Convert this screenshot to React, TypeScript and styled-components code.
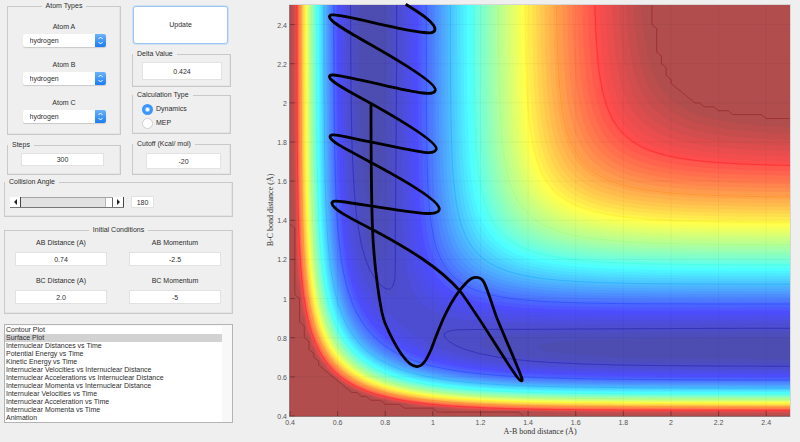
import React from "react";
import styled, { createGlobalStyle } from "styled-components";

const GlobalStyle = createGlobalStyle`
  * { box-sizing: border-box; }
  body {
    margin: 0;
    background: #efefef;
    color: #2e2e2e;
    font-family: "Liberation Sans", Arial, sans-serif;
    font-size: 7px;
    line-height: 8px;
  }
  button, input, select { font: inherit; color: inherit; }
`;

/* ---------- potential energy surface ---------- */

const WELL_DEPTH = 109.5;
const BETA = 1.942;
const R_EQ = 0.7419;
const SATO = 0.187;
const CUTOFF = -22;
const R_MIN = 0.4;
const R_MAX = 2.5;
const STEP = 0.02;
const NODES = Math.round((R_MAX - R_MIN) / STEP) + 1;

const PLOT = { left: 290, right: 790, top: 5, bottom: 416 };
const xOf = (r: number) =>
  PLOT.left + ((r - R_MIN) / (R_MAX - R_MIN)) * (PLOT.right - PLOT.left);
const yOf = (r: number) =>
  PLOT.bottom - ((r - R_MIN) / (R_MAX - R_MIN)) * (PLOT.bottom - PLOT.top);

function integrals(r: number) {
  const e = Math.exp(-BETA * (r - R_EQ));
  const q = (WELL_DEPTH / 4) * ((3 + SATO) * e * e - (2 + 6 * SATO) * e);
  const j = (WELL_DEPTH / 4) * ((1 + 3 * SATO) * e * e - (6 + 2 * SATO) * e);
  return [q, j];
}

function energy(ab: number, bc: number) {
  const [q1, j1] = integrals(ab);
  const [q2, j2] = integrals(bc);
  const [q3, j3] = integrals(ab + bc);
  const exchange = Math.sqrt(((j1 - j2) ** 2 + (j2 - j3) ** 2 + (j3 - j1) ** 2) / 2);
  return Math.min(CUTOFF, (q1 + q2 + q3 - exchange) / (1 + SATO));
}

type Point = [number, number];

const grid: number[][] = Array.from({ length: NODES }, (_, j) =>
  Array.from({ length: NODES }, (_, i) => energy(R_MIN + i * STEP, R_MIN + j * STEP))
);

/* Traces the level set; the grid is ringed with low values so every loop closes. */
function traceLoops(level: number): Point[][] {
  const size = NODES + 2;
  const clamp = (n: number) => Math.max(0, Math.min(NODES - 1, n - 1));
  const at = (i: number, j: number) =>
    i === 0 || j === 0 || i === size - 1 || j === size - 1 ? -1e9 : grid[j - 1][i - 1];
  const links = new Map<number, number[]>();
  const points = new Map<number, Point>();

  const edge = (i: number, j: number, vertical: boolean) => {
    const id = (j * size + i) * 2 + (vertical ? 1 : 0);
    if (!points.has(id)) {
      const i2 = vertical ? i : i + 1;
      const j2 = vertical ? j + 1 : j;
      const a = at(i, j);
      const b = at(i2, j2);
      const t = (level - a) / (b - a);
      points.set(id, [
        xOf(R_MIN + STEP * (clamp(i) + t * (clamp(i2) - clamp(i)))),
        yOf(R_MIN + STEP * (clamp(j) + t * (clamp(j2) - clamp(j)))),
      ]);
    }
    return id;
  };
  const link = (a: number, b: number) => {
    links.set(a, [...(links.get(a) || []), b]);
    links.set(b, [...(links.get(b) || []), a]);
  };

  for (let j = 0; j < size - 1; j++) {
    for (let i = 0; i < size - 1; i++) {
      const a = at(i, j) >= level;
      const b = at(i + 1, j) >= level;
      const c = at(i + 1, j + 1) >= level;
      const d = at(i, j + 1) >= level;
      const hits: number[] = [];
      if (a !== b) hits.push(edge(i, j, false));
      if (b !== c) hits.push(edge(i + 1, j, true));
      if (c !== d) hits.push(edge(i, j + 1, false));
      if (d !== a) hits.push(edge(i, j, true));
      for (let k = 0; k + 1 < hits.length; k += 2) link(hits[k], hits[k + 1]);
    }
  }

  const seen = new Set<number>();
  const loops: Point[][] = [];
  for (const start of links.keys()) {
    if (seen.has(start)) continue;
    const loop: Point[] = [];
    let current: number | undefined = start;
    while (current !== undefined) {
      seen.add(current);
      loop.push(points.get(current)!);
      current = links.get(current)!.find((n) => !seen.has(n));
    }
    loops.push(loop);
  }
  return loops;
}

const fmt = ([x, y]: Point) => `${x.toFixed(1)} ${y.toFixed(1)}`;
const regionPath = (level: number) =>
  traceLoops(level).map((l) => "M" + l.map(fmt).join("L") + "Z").join("");

/* Same level set without the stretches that run along the frame. */
function linePath(level: number) {
  const onFrame = ([x, y]: Point) =>
    x < PLOT.left + 0.01 || x > PLOT.right - 0.01 || y < PLOT.top + 0.01 || y > PLOT.bottom - 0.01;
  return traceLoops(level)
    .map((loop) =>
      loop
        .map((p, k) => {
          const prev = loop[(k + loop.length - 1) % loop.length];
          return (onFrame(p) && onFrame(prev) ? "M" : k === 0 ? `M${fmt(prev)}L` : "L") + fmt(p);
        })
        .join("")
    )
    .join("");
}

function jet(t: number, strength: number) {
  const channel = (center: number) => {
    const v = Math.max(0, Math.min(1, 1.5 - Math.abs(4 * t - center)));
    return Math.round(255 * (1 - strength) + 255 * strength * v);
  };
  return `rgb(${channel(3)},${channel(2)},${channel(1)})`;
}

const BANDS = 64;
const span = CUTOFF + WELL_DEPTH;
const bands = Array.from({ length: BANDS }, (_, k) => ({
  d: regionPath(CUTOFF - span * (1 - k / (BANDS - 1))),
  fill: jet(Math.min(k + 1, BANDS - 1) / BANDS, 0.7),
}));
const contours = Array.from({ length: 9 }, (_, k) => {
  const level = k === 8 ? CUTOFF : -105.6 + k * 10.4;
  return { d: linePath(level), stroke: jet((level + WELL_DEPTH) / span, 0.9) };
});

/* ---------- trajectory ---------- */

const trajectory = `
  M405.7 4.3C425 16 435.5 24 435 29.5C434.6 33 430 33.3 424 32.5
  C400 30 370 21 340 15.7C333 14.5 329 14.5 329.5 17C330 21 341 28 370 44.3
  C403 63 436 83 435.3 90C434.6 94 429 93.7 423 93
  C400 90 370 81 340 75.8C333 74.6 329 74.5 329.5 77C330 81 342 88 371 103.5
  C404 122 437 142 436.3 149C435.6 153 430 153 424 152.3
  C400 149 371 141.5 341 135.8C334 134.6 330 134 330 137C330.5 141 342 147 371 162.4
  C406 181 439.5 201 439.3 209C439 213.5 431 213.8 424 213.3
  C400 211 370 205.8 345 202C336 200.7 331.5 200.5 332 203.5C333 209 345 215.5 373.3 230
  C410 249.6 440 268 460 291C480 318 500 353 517 377C520 381 523 382.5 522 378.5
  C515 360 505 338 497 318.3C493 308 488 290 483.8 282C480.5 276 473 275.5 467 282
  C450 299 440 325 431.5 348.5C427 359 423 366.6 416.7 366.6C408 366.6 396 349 385 323
  C380.5 312 373.5 265 372.3 223C371 183 371 140 371 102.5`;

/* ---------- styled parts ---------- */

const Window = styled.main`
  display: flex;
  align-items: flex-start;
`;

const Sidebar = styled.div`
  flex: none;
  width: 260px;
  padding: 2px 27px 0 4px;
  display: flex;
  flex-direction: column;
`;

const Columns = styled.div`
  display: grid;
  grid-template-columns: 114px 1fr;
  gap: 11px;
  padding: 0 2px 0 3px;
`;

const Stack = styled.div<{ $gap: number }>`
  display: flex;
  flex-direction: column;
  gap: ${(p) => p.$gap}px;
`;

const GroupFrame = styled.fieldset<{ $top: number }>`
  min-width: 0;
  margin: ${(p) => p.$top}px 0 0;
  padding: 0;
  border: 1px solid #c9c9c9;
  box-shadow: inset -1px -1px 0 #e4e4e4;
`;

const Legend = styled.legend<{ $center?: boolean }>`
  padding: 0 4px;
  margin: ${(p) => (p.$center ? "0 auto" : "0")};
`;

const GroupBody = styled.div<{ $pad: string }>`
  padding: ${(p) => p.$pad};
`;

const AtomField = styled.label`
  display: flex;
  flex-direction: column;
  align-items: center;
  gap: 3px;
`;

const SelectBox = styled.span`
  position: relative;
  width: 83px;
  height: 13px;
`;

const Select = styled.select`
  appearance: none;
  display: block;
  width: 100%;
  height: 13px;
  padding: 0 14px 0 7px;
  border: 0;
  border-radius: 2px;
  background: #fff;
  box-shadow: 0 1px 1px #c8c8c8;
`;

const Stepper = styled.svg`
  position: absolute;
  top: 0;
  right: 0;
  width: 11px;
  height: 13px;
  pointer-events: none;
`;

const UpdateButton = styled.button`
  height: 38px;
  margin: 4px 3px 2px 1px;
  border: 1px solid #9fc6f0;
  border-radius: 3px;
  background: #fff;
  box-shadow: 0 0 0 1px #cfe0f3;
`;

const TextBox = styled.input<{ $height: number }>`
  display: block;
  width: 100%;
  min-width: 0;
  height: ${(p) => p.$height}px;
  padding: 0;
  border: 1px solid #e2e2e2;
  background: #fff;
  text-align: center;
`;

const RadioRow = styled.label`
  display: flex;
  align-items: center;
  gap: 3px;
  height: 14px;
`;

const Radio = styled.input`
  appearance: none;
  width: 11px;
  height: 11px;
  margin: 0;
  border: 1px solid #cfcfcf;
  border-radius: 50%;
  background: #fff;
  &:checked {
    border: 0;
    background: radial-gradient(circle, #fff 1px, #3a96fb 3px);
  }
`;

const AngleRow = styled.div`
  display: grid;
  grid-template-columns: 114px 23px;
  align-items: center;
  gap: 7px;
`;

const Scroller = styled.div`
  display: flex;
  height: 11px;
  border-bottom: 1px solid #777;
`;

const ArrowButton = styled.button`
  flex: none;
  width: 11px;
  padding: 0;
  border: 0;
  border-right: 1px solid #444;
  background: #fff;
  svg { display: block; margin: auto; }
`;

const Range = styled.input`
  appearance: none;
  flex: 1;
  min-width: 0;
  height: 10px;
  margin: 0;
  border-top: 1px solid #a5a5a5;
  background: #e1e1e1;
  &::-webkit-slider-thumb {
    appearance: none;
    width: 8px;
    height: 9px;
    border-left: 1px solid #b5b5b5;
    border-right: 1px solid #666;
    background: #fff;
  }
`;

const Conditions = styled.div`
  display: grid;
  grid-template-columns: 92px 92px;
  gap: 11px 22px;
`;

const Condition = styled.label`
  display: flex;
  flex-direction: column;
  gap: 5px;
  text-align: center;
`;

const PlotList = styled.select`
  display: block;
  width: 100%;
  height: 99px;
  margin-top: 10px;
  padding: 1px 10px 0 0;
  border: 1px solid #b4b4b4;
  border-radius: 0;
  background: #f8f8f8;
  overflow: hidden;
  outline: none;
  option {
    height: 8px;
    min-height: 0;
    padding: 0 1px;
    background: #fff;
    color: #2e2e2e;
  }
  option:checked {
    background: #d2d2d2 linear-gradient(#d2d2d2, #d2d2d2);
  }
`;

const Figure = styled.figure`
  flex: 1;
  min-width: 0;
  margin: 0;
  svg { display: block; width: 100%; height: auto; }
`;

const TickText = styled.text`
  font-size: 7px;
  fill: #555;
`;

const AxisTitle = styled.text`
  font-family: "Liberation Serif", "Times New Roman", serif;
  font-size: 8px;
  fill: #333;
`;

/* ---------- components ---------- */

type GroupProps = {
  title: string;
  pad: string;
  center?: boolean;
  top?: number;
  children: React.ReactNode;
};

function Group({ title, pad, center, top = 0, children }: GroupProps) {
  return (
    <GroupFrame $top={top}>
      <Legend $center={center}>{title}</Legend>
      <GroupBody $pad={pad}>{children}</GroupBody>
    </GroupFrame>
  );
}

function AtomSelect({ name }: { name: string }) {
  return (
    <AtomField>
      {name}
      <SelectBox>
        <Select defaultValue="hydrogen">
          <option>hydrogen</option>
        </Select>
        <Stepper viewBox="0 0 11 13" aria-hidden="true">
          <defs>
            <linearGradient id="stepper" x2="0" y2="1">
              <stop stopColor="#6bb3fb" />
              <stop offset="1" stopColor="#1a7cf6" />
            </linearGradient>
          </defs>
          <path d="M0 0H9Q11 0 11 2V11Q11 13 9 13H0Z" fill="url(#stepper)" />
          <path d="M3.5 5L5.5 3L7.5 5M3.5 8L5.5 10L7.5 8" fill="none" stroke="#fff" strokeWidth="1" />
        </Stepper>
      </SelectBox>
    </AtomField>
  );
}

function Arrow({ label, d }: { label: string; d: string }) {
  return (
    <ArrowButton type="button" aria-label={label}>
      <svg width="5" height="6" viewBox="0 0 5 6">
        <path d={d} fill="#222" />
      </svg>
    </ArrowButton>
  );
}

const conditions = [
  ["AB Distance (A)", "0.74"],
  ["AB Momentum", "-2.5"],
  ["BC Distance (A)", "2.0"],
  ["BC Momentum", "-5"],
];

const plots = [
  "Contour Plot",
  "Surface Plot",
  "Internuclear Distances vs Time",
  "Potential Energy vs Time",
  "Kinetic Energy vs Time",
  "Internuclear Velocities vs Internuclear Distance",
  "Internuclear Accelerations vs Internuclear Distance",
  "Internuclear Momenta vs Internuclear Distance",
  "Internulear Velocities vs Time",
  "Internuclear Acceleration vs Time",
  "Internuclear Momenta vs Time",
  "Animation",
];

const ticks = Array.from({ length: 11 }, (_, k) => (4 + 2 * k) / 10);

function Chart() {
  return (
    <Figure>
      <svg viewBox="260 0 540 442" role="img" aria-label="Potential energy surface with trajectory">
        <rect x="289" y="4" width="502" height="413" fill="#d6d6d6" />
        <rect x="290" y="5" width="500" height="411" fill={jet(1 / BANDS, 0.7)} />
        {bands.map((b, k) => (
          <path key={k} d={b.d} fill={b.fill} fillRule="evenodd" />
        ))}
        {contours.map((c, k) => (
          <path key={k} d={c.d} fill="none" stroke={c.stroke} strokeWidth="1" strokeOpacity="0.5" />
        ))}
        {ticks.map((t) => (
          <g key={t} stroke="#000">
            <path d={`M${xOf(t)} 416V5M290 ${yOf(t)}H790`} strokeOpacity="0.04" />
            <path d={`M${xOf(t)} 416v-5M290 ${yOf(t)}h5`} strokeOpacity="0.3" />
          </g>
        ))}
        <path d="M289.5 5V416.5H790" fill="none" stroke="#6b3a3a" strokeOpacity="0.6" />
        <path d={trajectory} fill="none" stroke="#000" strokeWidth="2.8" strokeLinejoin="round" />
        {ticks.map((t) => (
          <g key={t}>
            <TickText x={xOf(t)} y="425" textAnchor="middle">{t}</TickText>
            <TickText x="287" y={yOf(t) + 3} textAnchor="end">{t}</TickText>
          </g>
        ))}
        <AxisTitle x="540" y="434" textAnchor="middle">A-B bond distance (Å)</AxisTitle>
        <AxisTitle transform="translate(273 210) rotate(-90)" textAnchor="middle">
          B-C bond distance (Å)
        </AxisTitle>
      </svg>
    </Figure>
  );
}

export default function App() {
  return (
    <>
      <GlobalStyle />
      <Window>
        <Sidebar>
          <Columns>
            <Stack $gap={6}>
              <Group title="Atom Types" center pad="13px 14px 11px">
                <Stack $gap={14}>
                  <AtomSelect name="Atom A" />
                  <AtomSelect name="Atom B" />
                  <AtomSelect name="Atom C" />
                </Stack>
              </Group>
              <Group title="Steps" pad="4px 16px 8px 13px">
                <TextBox $height={13} aria-label="Steps" defaultValue="300" />
              </Group>
            </Stack>
            <Stack $gap={4}>
              <UpdateButton type="button">Update</UpdateButton>
              <Group title="Delta Value" pad="4px 8px 6px 9px">
                <TextBox $height={18} aria-label="Delta Value" defaultValue="0.424" />
              </Group>
              <Group title="Calculation Type" pad="3px 9px">
                <RadioRow>
                  <Radio type="radio" name="calc" defaultChecked />
                  Dynamics
                </RadioRow>
                <RadioRow>
                  <Radio type="radio" name="calc" />
                  MEP
                </RadioRow>
              </Group>
              <Group title="Cutoff (Kcal/ mol)" pad="5px 9px 5px 13px" top={2}>
                <TextBox $height={16} aria-label="Cutoff (Kcal/ mol)" defaultValue="-20" />
              </Group>
            </Stack>
          </Columns>
          <Group title="Collision Angle" pad="10px 5px 8px" top={3}>
            <AngleRow>
              <Scroller>
                <Arrow label="Decrease angle" d="M4 0V6L1 3Z" />
                <Range type="range" min="0" max="180" defaultValue="180" aria-label="Collision Angle" />
                <Arrow label="Increase angle" d="M1 0V6L4 3Z" />
              </Scroller>
              <TextBox $height={12} aria-label="Angle in degrees" defaultValue="180" />
            </AngleRow>
          </Group>
          <Group title="Initial Conditions" center pad="5px 10px 9px" top={9}>
            <Conditions>
              {conditions.map(([label, value]) => (
                <Condition key={label}>
                  {label}
                  <TextBox $height={14} defaultValue={value} />
                </Condition>
              ))}
            </Conditions>
          </Group>
          <PlotList size={12} defaultValue="Surface Plot" aria-label="Plot">
            {plots.map((p) => (
              <option key={p}>{p}</option>
            ))}
          </PlotList>
        </Sidebar>
        <Chart />
      </Window>
    </>
  );
}
